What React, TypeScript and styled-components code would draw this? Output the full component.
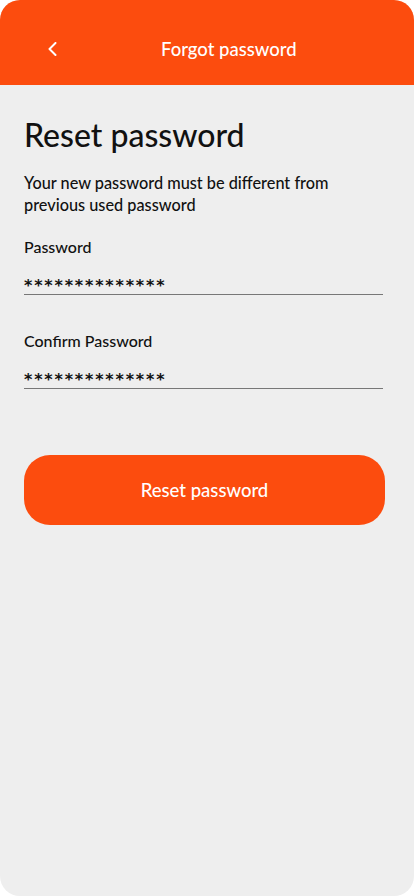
import React from "react";
import styled, { createGlobalStyle } from "styled-components";

const Global = createGlobalStyle`
  html, body { margin: 0; padding: 0; background: #ffffff; }
  * { box-sizing: border-box; }
`;

const Screen = styled.div`
  width: 414px;
  height: 896px;
  background: #eeeeee;
  border-radius: 20px;
  overflow: hidden;
  display: flex;
  flex-direction: column;
  font-family: "Lato", "Noto Sans", sans-serif;
  color: #111111;
`;

const Header = styled.header`
  height: 85px;
  background: #fc4c0e;
  display: flex;
  align-items: center;
  padding-top: 12px;
`;

const BackButton = styled.button`
  background: none;
  border: 0;
  padding: 0;
  margin-left: 47px;
  width: 14px;
  height: 16px;
  display: flex;
  align-items: center;
  cursor: pointer;
`;

const Title = styled.h1`
  margin: 0 0 0 100px;
  color: #ffffff;
  font-size: 18.5px;
  font-weight: 500;
  white-space: nowrap;
`;

const Body = styled.main`
  padding: 30px 24px 0 24px;
  display: flex;
  flex-direction: column;
`;

const Heading = styled.h2`
  margin: 0;
  font-size: 32px;
  font-weight: 500;
  line-height: 40px;
`;

const Subtitle = styled.p`
  margin: 17px 0 0;
  font-size: 16.3px;
  line-height: 22px;
  font-weight: 500;
  max-width: 330px;
`;

const Field = styled.div<{ $top: number }>`
  margin-top: ${(p) => p.$top}px;
  display: flex;
  flex-direction: column;
  width: 359px;
`;

const Label = styled.label`
  font-size: 16px;
  font-weight: 500;
  line-height: 20px;
`;

const Stars = styled.div`
  margin-top: 21px;
  font-family: "DejaVu Sans", sans-serif;
  font-size: 16px;
  font-weight: bold;
  letter-spacing: 1.8px;
  line-height: 15px;
  padding-bottom: 1px;
  border-bottom: 1px solid #777777;
`;

const Submit = styled.button`
  margin-top: 66px;
  width: 361px;
  height: 70px;
  border: 0;
  border-radius: 26px;
  background: #fc4c0e;
  color: #ffffff;
  font-family: inherit;
  font-size: 18.5px;
  font-weight: 500;
  cursor: pointer;
`;

export default function App() {
  return (
    <>
      <Global />
      <Screen>
        <Header>
          <BackButton aria-label="Back">
            <svg width="10" height="14" viewBox="0 0 10 14">
              <path d="M8.5 1 L2.5 7 L8.5 13" fill="none" stroke="#fff" strokeWidth="2" strokeLinecap="round" strokeLinejoin="round" />
            </svg>
          </BackButton>
          <Title>Forgot password</Title>
        </Header>
        <Body>
          <Heading>Reset password</Heading>
          <Subtitle>Your new password must be different from previous used password</Subtitle>
          <Field $top={21}>
            <Label>Password</Label>
            <Stars>**************</Stars>
          </Field>
          <Field $top={36}>
            <Label>Confirm Password</Label>
            <Stars>**************</Stars>
          </Field>
          <Submit>Reset password</Submit>
        </Body>
      </Screen>
    </>
  );
}
